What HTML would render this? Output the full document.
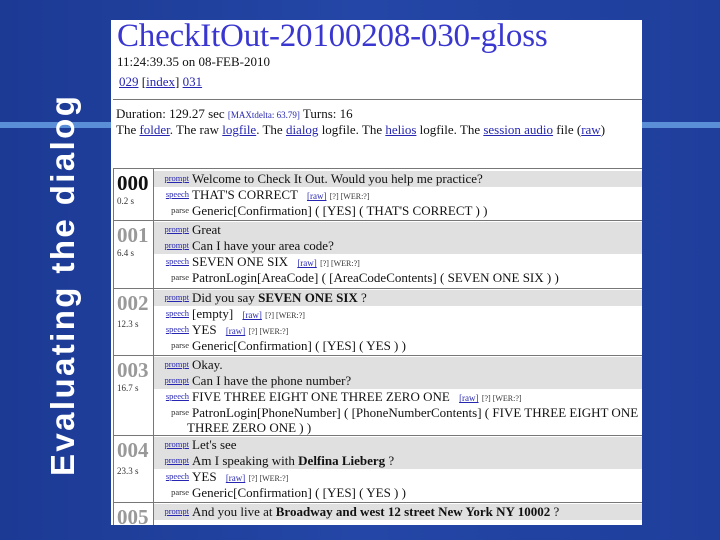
<!DOCTYPE html>
<html><head><meta charset="utf-8"><style>
*{margin:0;padding:0;box-sizing:border-box}
body{width:720px;height:540px;overflow:hidden;background:linear-gradient(90deg,#1c3a94,#2446a6 50%,#1f3e9c);position:relative;font-family:"Liberation Serif",serif}
.bar{position:absolute;top:122px;height:6px;background:#5a8fd8}
.title{position:absolute;left:44px;top:476px;transform-origin:0 0;transform:rotate(-90deg);color:#fff;font:bold 33px/38px "Liberation Sans",sans-serif;white-space:nowrap;letter-spacing:2.4px}
.panel{position:absolute;left:111px;top:20px;width:531px;height:505px;background:#fff;overflow:hidden}
h1{position:absolute;left:6px;top:-2px;font-weight:normal;font-size:33px;color:#3a36d0;white-space:nowrap;letter-spacing:-0.2px}
.t{position:absolute;white-space:nowrap;font-size:13px;color:#111}
a{color:#2626b0;text-decoration:underline}
.hr{position:absolute;left:2px;right:0;top:79px;height:1px;background:#777}
.tbl{position:absolute;left:2px;top:148px;width:529px;height:360px;border-top:1px solid #777;border-left:1px solid #777}
.row{position:absolute;left:0;width:529px;border-bottom:1px solid #777}
.num{position:absolute;left:3px;top:2px;font-size:21px;font-weight:bold;color:#999}
.sec{position:absolute;left:3px;top:27px;font-size:9px;color:#333}
.vl{position:absolute;left:39px;top:0;bottom:0;width:1px;background:#777}
.ln{position:absolute;left:40px;right:0;height:16px;font-size:13px;line-height:16px;white-space:nowrap;color:#111}
.g{background:#e0e0e0}
.lb{display:inline-block;width:35px;text-align:right;font-size:8.5px;color:#2626b0;margin-right:3px;vertical-align:top;line-height:14px}
.lb.u{text-decoration:underline}
.lb.p{color:#333}
.sm{font-size:8px;color:#333}
.rw{font-size:9px;color:#2626b0;text-decoration:underline;margin-left:6px}
</style></head><body>
<div class="bar" style="left:0;width:111px"></div>
<div class="bar" style="left:642px;width:78px"></div>
<div class="title">Evaluating the dialog</div>
<div class="panel">
<h1>CheckItOut-20100208-030-gloss</h1>
<div class="t" style="left:6px;top:34px">11:24:39.35 on 08-FEB-2010</div>
<div class="t" style="left:8px;top:54px"><a>029</a> [<a>index</a>] <a>031</a></div>
<div class="hr"></div>
<div class="t" style="left:5px;top:86px">Duration: 129.27 sec <span style="font-size:9px;color:#2626b0">[MAXtdelta: 63.79]</span> Turns: 16</div>
<div class="t" style="left:5px;top:102px">The <a>folder</a>. The raw <a>logfile</a>. The <a>dialog</a> logfile. The <a>helios</a> logfile. The <a>session audio</a> file (<a>raw</a>)</div>
<div class="tbl">
<div class="row" style="top:0;height:52px"><div class="num" style="color:#111">000</div><div class="sec">0.2 s</div><div class="vl"></div>
<div class="ln g" style="top:2px"><span class="lb u">prompt</span>Welcome to Check It Out. Would you help me practice?</div>
<div class="ln" style="top:18px"><span class="lb u">speech</span>THAT'S CORRECT <span class="rw">[raw]</span> <span class="sm">[?] [WER:?]</span></div>
<div class="ln" style="top:34px"><span class="lb p">parse</span>Generic[Confirmation] ( [YES] ( THAT'S CORRECT ) )</div></div>
<div class="row" style="top:52px;height:68px"><div class="num">001</div><div class="sec">6.4 s</div><div class="vl"></div>
<div class="ln g" style="top:1px"><span class="lb u">prompt</span>Great</div>
<div class="ln g" style="top:17px"><span class="lb u">prompt</span>Can I have your area code?</div>
<div class="ln" style="top:33px"><span class="lb u">speech</span>SEVEN ONE SIX <span class="rw">[raw]</span> <span class="sm">[?] [WER:?]</span></div>
<div class="ln" style="top:49px"><span class="lb p">parse</span>PatronLogin[AreaCode] ( [AreaCodeContents] ( SEVEN ONE SIX ) )</div></div>
<div class="row" style="top:120px;height:67px"><div class="num">002</div><div class="sec" style="top:30px">12.3 s</div><div class="vl"></div>
<div class="ln g" style="top:1px"><span class="lb u">prompt</span>Did you say <b>SEVEN ONE SIX</b> ?</div>
<div class="ln" style="top:17px"><span class="lb u">speech</span>[empty] <span class="rw">[raw]</span> <span class="sm">[?] [WER:?]</span></div>
<div class="ln" style="top:33px"><span class="lb u">speech</span>YES <span class="rw">[raw]</span> <span class="sm">[?] [WER:?]</span></div>
<div class="ln" style="top:49px"><span class="lb p">parse</span>Generic[Confirmation] ( [YES] ( YES ) )</div></div>
<div class="row" style="top:187px;height:80px"><div class="num">003</div><div class="sec">16.7 s</div><div class="vl"></div>
<div class="ln g" style="top:1px"><span class="lb u">prompt</span>Okay.</div>
<div class="ln g" style="top:17px"><span class="lb u">prompt</span>Can I have the phone number?</div>
<div class="ln" style="top:33px"><span class="lb u">speech</span>FIVE THREE EIGHT ONE THREE ZERO ONE <span class="rw">[raw]</span> <span class="sm">[?] [WER:?]</span></div>
<div class="ln" style="top:49px"><span class="lb p">parse</span>PatronLogin[PhoneNumber] ( [PhoneNumberContents] ( FIVE THREE EIGHT ONE</div>
<div class="ln" style="top:64px;padding-left:33px">THREE ZERO ONE ) )</div></div>
<div class="row" style="top:267px;height:67px"><div class="num">004</div><div class="sec" style="top:30px">23.3 s</div><div class="vl"></div>
<div class="ln g" style="top:1px"><span class="lb u">prompt</span>Let's see</div>
<div class="ln g" style="top:17px"><span class="lb u">prompt</span>Am I speaking with <b>Delfina Lieberg</b> ?</div>
<div class="ln" style="top:33px"><span class="lb u">speech</span>YES <span class="rw">[raw]</span> <span class="sm">[?] [WER:?]</span></div>
<div class="ln" style="top:49px"><span class="lb p">parse</span>Generic[Confirmation] ( [YES] ( YES ) )</div></div>
<div class="row" style="top:334px;height:40px;border:0"><div class="num">005</div><div class="vl"></div>
<div class="ln g" style="top:1px"><span class="lb u">prompt</span>And you live at <b>Broadway and west 12 street New York NY 10002</b> ?</div></div>
</div>
</div>
</body></html>
